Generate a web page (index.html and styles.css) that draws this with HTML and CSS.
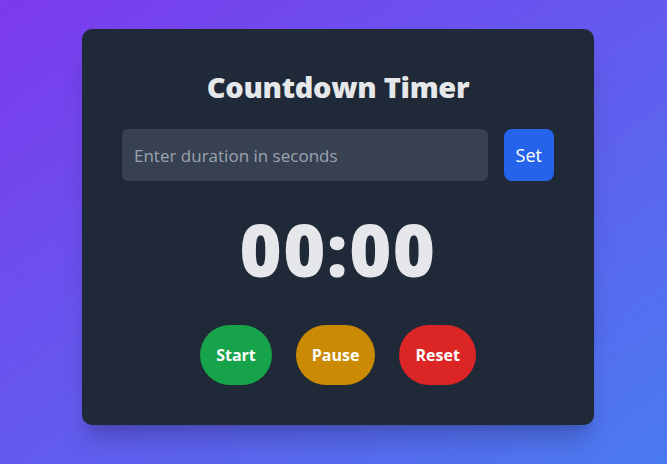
FILE: index.html
```html
<!DOCTYPE html>
<html lang="en">
<head>
<meta charset="utf-8">
<title>Countdown Timer</title>
<link rel="stylesheet" href="styles.css">
</head>
<body>
<main class="card">
  <h1 class="title">Countdown Timer</h1>
  <div class="input-row">
    <input class="duration" type="text" placeholder="Enter duration in seconds">
    <button class="set-btn">Set</button>
  </div>
  <div class="display">00:00</div>
  <div class="controls">
    <button class="pill start">Start</button>
    <button class="pill pause">Pause</button>
    <button class="pill reset">Reset</button>
  </div>
</main>
</body>
</html>
```

FILE: styles.css
```css
* { box-sizing: border-box; }
html, body { height: 100%; }
body {
  margin: 0;
  font-family: "Open Sans", "Noto Sans", sans-serif;
  background: linear-gradient(to bottom right, #7c3aed, #4a7bf0);
  display: flex;
  justify-content: center;
  align-items: flex-start;
  padding-top: 29px;
  padding-left: 9px;
}
.card {
  width: 512px;
  background: #1f2937;
  border-radius: 10px;
  padding: 40px;
  box-shadow: 0 20px 25px -5px rgba(0,0,0,0.18), 0 8px 10px -6px rgba(0,0,0,0.12);
  display: flex;
  flex-direction: column;
  align-items: center;
}
.title {
  margin: 0 0 24px;
  font-size: 29px;
  line-height: 36px;
  font-weight: 800;
  letter-spacing: -0.3px;
  color: #e5e7eb;
}
.input-row {
  display: flex;
  gap: 16px;
  width: 100%;
}
.duration {
  flex: 1;
  height: 52px;
  border: none;
  border-radius: 6px;
  background: #374151;
  padding: 0 12px;
  font-family: inherit;
  font-size: 17px;
  color: #e5e7eb;
  outline: none;
}
.duration::placeholder { color: #9ca3af; }
.set-btn {
  height: 52px;
  padding: 0 12px;
  border: none;
  border-radius: 8px;
  background: #2563eb;
  color: #fff;
  font-family: inherit;
  font-size: 18px;
}
.display {
  margin-top: 32px;
  font-size: 72px;
  line-height: 72px;
  font-weight: 800;
  letter-spacing: 1.5px;
  color: #e5e7eb;
}
.controls {
  margin-top: 40px;
  display: flex;
  gap: 24px;
}
.pill {
  height: 60px;
  padding: 0 16px;
  border: none;
  border-radius: 9999px;
  color: #fff;
  font-family: inherit;
  font-size: 16px;
  font-weight: 700;
}
.start { background: #16a34a; }
.pause { background: #ca8a04; }
.reset { background: #dc2626; }
```
